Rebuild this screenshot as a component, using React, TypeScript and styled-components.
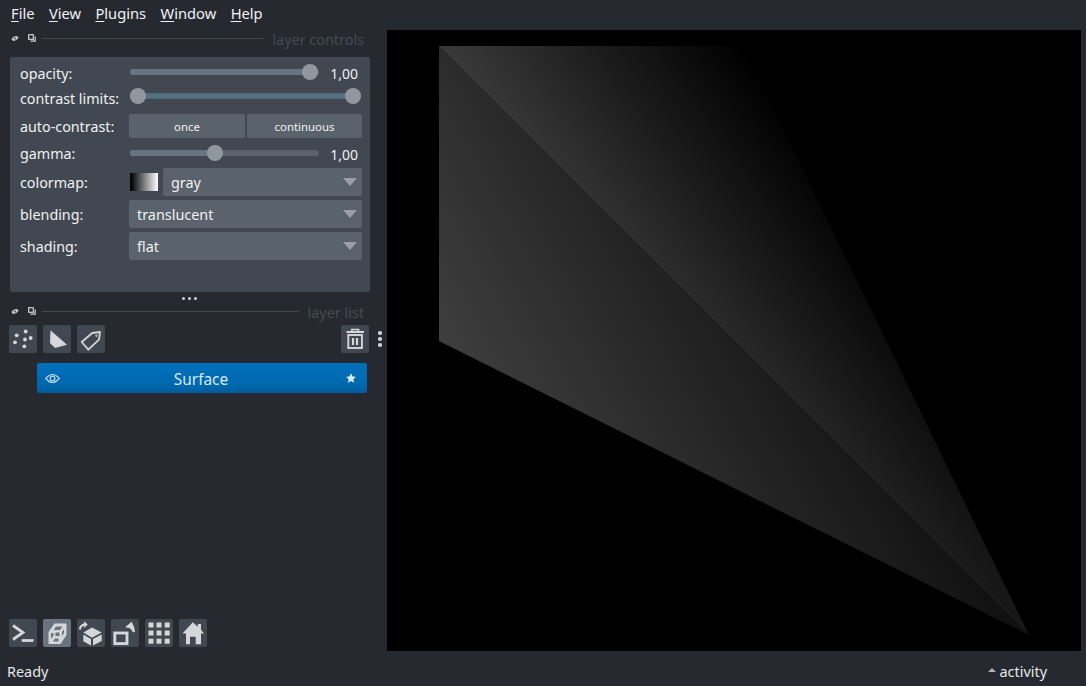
import React from "react";
import styled, { createGlobalStyle } from "styled-components";

const Global = createGlobalStyle`
  html, body { margin: 0; padding: 0; height: 100%; background: #262930; }
  #root { height: 100%; }
  * { box-sizing: border-box; }
`;

const Shell = styled.div`
  width: 1086px; height: 686px; display: flex; flex-direction: column; overflow: hidden;
  background: #262930; color: #f0f1f2; font-family: "Noto Sans", "Open Sans", sans-serif; font-size: 14.4px;
`;
const MenuBar = styled.div`
  height: 26px; display: flex; align-items: center; padding: 0 0 1px 11px; gap: 14.4px; flex: none; color: #f0f1f2; font-size: 14.7px;
`;
const MenuItem = styled.span`
  u { text-underline-offset: 2px; text-decoration-thickness: 1px; }
`;
const Main = styled.div` flex: 1; display: flex; min-height: 0; `;
const Side = styled.div` width: 387px; flex: none; display: flex; flex-direction: column; `;
const DockTitle = styled.div<{ $h: number }>`
  height: ${(p) => p.$h}px; margin-bottom: 7px; flex: none; padding-left: 11px; display: flex; align-items: center;
  color: #454a54; width: 364px;
`;
const TinyIcons = styled.div` display: flex; gap: 9px; align-items: center; margin-right: 6px; svg { display: block; } `;
const Rule = styled.div` flex: 1; height: 1px; background: #414851; margin-right: 9px; `;
const TitleText = styled.span` position: relative; top: 2px; line-height: 1; `;
const ControlsPanel = styled.div`
  margin: 0 17px 0 10px; height: 235px; flex: none; background: #414851; border-radius: 2px;
  padding: 3px 8px 0 10px; display: flex; flex-direction: column;
`;
const Row = styled.div<{ $h: number }>`
  height: ${(p) => p.$h}px; display: grid; grid-template-columns: 109px 1fr; align-items: center; flex: none;
`;
const Label = styled.span` white-space: nowrap; line-height: 1; font-size: 14.3px; margin-top: 2px; `;
const SliderWrap = styled.div<{ $lift: number }>` display: flex; align-items: center; margin-top: ${(p) => -p.$lift}px; `;
const Track = styled.div`
  position: relative; height: 6px; width: 189px; background: #5a626c; border-radius: 3px; margin-left: 1px;
`;
const TrackFill = styled.div<{ $w: number }>`
  height: 6px; background: #6a7480; border-radius: 3px; width: ${(p) => p.$w}px;
`;
const Knob = styled.div<{ $l: number }>`
  position: absolute; top: -5px; left: ${(p) => p.$l}px; width: 16px; height: 16px; border-radius: 50%; background: #8f979f;
`;
const RangeKnob = styled(Knob)` top: -6px; `;
const Value = styled.span` margin: 4px 0 0 11px; width: 28px; text-align: right; line-height: 1; font-size: 14px; `;
const RangeTrack = styled.div`
  position: relative; height: 6px; width: 231px; margin-left: 1px; background: #4f7584;
  border-top: 1px solid #5a626c; border-bottom: 1px solid #5a626c;
`;
const ButtonPair = styled.div` display: grid; grid-template-columns: 116px 115px; gap: 2px; `;
const FlatButton = styled.div`
  height: 24px; background: #5a626c; border-radius: 2px; display: flex; align-items: center; justify-content: center;
  font-size: 11.4px; color: #f0f1f2;
`;
const Combo = styled.div`
  height: 28px; flex: 1; background: #5a626c; border-radius: 2px; display: flex; align-items: center; justify-content: space-between;
  padding: 0 5px 0 8px;
`;
const Arrow = styled.div`
  width: 0; height: 0; border-left: 7.5px solid transparent; border-right: 7.5px solid transparent; border-top: 8px solid #9ba0a7;
`;
const ColorRow = styled.div` display: flex; align-items: center; gap: 5px; padding-left: 1px; `;
const Swatch = styled.div`
  width: 28px; height: 18px; background: linear-gradient(90deg, #000 0%, #111 10%, #fff 100%);
`;
const Splitter = styled.div`
  height: 12px; flex: none; display: flex; justify-content: center; align-items: center; gap: 3px; padding-right: 9px;
  i { width: 3px; height: 3px; border-radius: 50%; background: #d0d2d5; display: block; }
`;
const LayerButtons = styled.div`
  display: flex; padding: 0 2px 0 9px; align-items: center; gap: 6px; height: 28px; flex: none;
`;
const IconBtn = styled.div<{ $active?: boolean }>`
  width: 28px; height: 28px; border-radius: 2px; flex: none; background: ${(p) => (p.$active ? "#6a7480" : "#414851")};
  svg { display: block; }
`;
const Spacer = styled.div` flex: 1; `;
const Kebab = styled.div`
  width: 10px; flex: none; display: flex; flex-direction: column; align-items: center; gap: 2.5px;
  i { width: 3.5px; height: 3.5px; border-radius: 50%; background: #d0d2d5; display: block; }
`;
const LayerItem = styled.div`
  margin: 10px 20px 0 37px; height: 30px; flex: none; border-radius: 2px;
  background: linear-gradient(180deg, #0070bb 0%, #0069b0 70%, #005d9e 100%);
  display: flex; align-items: center; padding: 0 11px 0 8px; color: #dbe9f4; font-size: 15.4px;
`;
const LayerName = styled.span` flex: 1; text-align: center; padding: 2px 4px 0 0; `;
const Grow = styled.div` flex: 1; `;
const ViewerButtons = styled.div` display: flex; padding: 0 0 4px 9px; gap: 6px; flex: none; `;
const CanvasArea = styled.div` flex: 1; padding: 4px 5px 0 0; display: flex; `;
const Canvas = styled.div` flex: 1; background: #000; `;
const CanvasSvg = styled.svg` display: block; width: 100%; height: 100%; `;
const StatusBar = styled.div`
  height: 35px; flex: none; display: flex; align-items: center; justify-content: space-between; padding: 6px 39px 0 7px; color: #e6e8ea;
`;
const Activity = styled.span` display: flex; align-items: center; gap: 4px; `;
const Caret = styled.span`
  width: 0; height: 0; border-left: 4px solid transparent; border-right: 4px solid transparent; border-bottom: 4px solid #b0b3b8; margin-top: -3px;
`;

const INK = "#d4d6d9";

const EyeTiny = () => (
  <svg width="8" height="7" viewBox="0 0 8 7">
    <path d="M0.3 4 Q3 0.5 6 1 L7.7 2.8 Q5 6.5 2 6Z" fill="#c4c6ca" />
    <circle cx="4" cy="3.5" r="1" fill="#55585f" />
  </svg>
);
const FloatTiny = () => (
  <svg width="8" height="8" viewBox="0 0 8 8" fill="none" stroke="#d0d2d5" strokeWidth="1.2">
    <rect x="0.7" y="0.7" width="4.6" height="4.6" />
    <path d="M2.5 7.2H7.2V2.6" />
  </svg>
);

const Slider = ({ fill, knob }: { fill: number; knob: number }) => (
  <SliderWrap $lift={2}>
    <Track>
      <TrackFill $w={fill} />
      <Knob $l={knob} />
    </Track>
    <Value>1,00</Value>
  </SliderWrap>
);

const Icon = ({ children, ...rest }: React.SVGProps<SVGSVGElement>) => (
  <svg width="28" height="28" viewBox="0 0 28 28" {...rest}>{children}</svg>
);

export default function App() {
  return (
    <Shell>
      <Global />
      <MenuBar>
        <MenuItem><u>F</u>ile</MenuItem>
        <MenuItem><u>V</u>iew</MenuItem>
        <MenuItem><u>P</u>lugins</MenuItem>
        <MenuItem><u>W</u>indow</MenuItem>
        <MenuItem><u>H</u>elp</MenuItem>
      </MenuBar>
      <Main>
        <Side>
          <DockTitle $h={24}>
            <TinyIcons><EyeTiny /><FloatTiny /></TinyIcons>
            <Rule />
            <TitleText>layer controls</TitleText>
          </DockTitle>
          <ControlsPanel>
            <Row $h={26}><Label>opacity:</Label><Slider fill={180} knob={172} /></Row>
            <Row $h={25}>
              <Label>contrast limits:</Label>
              <SliderWrap $lift={5}>
                <RangeTrack><RangeKnob $l={0} /><RangeKnob $l={215} /></RangeTrack>
              </SliderWrap>
            </Row>
            <Row $h={30}>
              <Label>auto-contrast:</Label>
              <ButtonPair><FlatButton>once</FlatButton><FlatButton>continuous</FlatButton></ButtonPair>
            </Row>
            <Row $h={25}><Label>gamma:</Label><Slider fill={85} knob={77} /></Row>
            <Row $h={32}>
              <Label>colormap:</Label>
              <ColorRow><Swatch /><Combo>gray<Arrow /></Combo></ColorRow>
            </Row>
            <Row $h={32}><Label>blending:</Label><Combo>translucent<Arrow /></Combo></Row>
            <Row $h={32}><Label>shading:</Label><Combo>flat<Arrow /></Combo></Row>
          </ControlsPanel>
          <Splitter><i /><i /><i /></Splitter>
          <DockTitle $h={14}>
            <TinyIcons><EyeTiny /><FloatTiny /></TinyIcons>
            <Rule />
            <TitleText>layer list</TitleText>
          </DockTitle>
          <LayerButtons>
            <IconBtn>
              <Icon fill={INK}>
                <circle cx="16.7" cy="6.5" r="1.9" /><circle cx="7.7" cy="10.3" r="1.9" /><circle cx="16" cy="14.5" r="1.9" />
                <circle cx="21.7" cy="13" r="1.9" /><circle cx="6" cy="17.3" r="1.9" /><circle cx="15.3" cy="21.3" r="1.9" />
              </Icon>
            </IconBtn>
            <IconBtn>
              <Icon fill={INK}><path d="M7.5 5.3 L24 19.7 L12 23 L7 18Z" /></Icon>
            </IconBtn>
            <IconBtn>
              <Icon fill="none" stroke={INK} strokeWidth="1.8" strokeLinejoin="round">
                <path d="M4.7 17 L15.3 8 L23 7 L22 14.7 L11.3 24.7Z" /><circle cx="19.5" cy="10.7" r="0.8" strokeWidth="1" />
              </Icon>
            </IconBtn>
            <Spacer />
            <IconBtn>
              <Icon fill="none" stroke={INK}>
                <path d="M5.5 7H23" strokeWidth="2" /><path d="M10.8 6.5V4.5H17.5V6.5" strokeWidth="1.6" />
                <rect x="7.3" y="10" width="13.6" height="13" strokeWidth="1.9" />
                <path d="M12 13V20M16 13V20" strokeWidth="2.2" />
              </Icon>
            </IconBtn>
            <Kebab><i /><i /><i /></Kebab>
          </LayerButtons>
          <LayerItem>
            <svg width="15" height="11" viewBox="0 0 15 11" fill="none" stroke="#bcd6ea" strokeWidth="1.2">
              <path d="M0.8 5.5 Q7.5 -2.5 14.2 5.5 Q7.5 13.5 0.8 5.5Z" /><circle cx="7.5" cy="5.5" r="2.4" />
            </svg>
            <LayerName>Surface</LayerName>
            <svg width="10" height="10" viewBox="0 0 24 24" fill="#dbe9f4"><path d="M12 0.5 L15.6 8.2 L23.8 9.2 L17.8 15 L19.4 23.4 L12 19.2 L4.6 23.4 L6.2 15 L0.2 9.2 L8.4 8.2Z" /></svg>
          </LayerItem>
          <Grow />
          <ViewerButtons>
            <IconBtn>
              <Icon fill="none" stroke={INK} strokeWidth="2.8">
                <path d="M4 6.5 L14 13.5 L4 20.5" /><path d="M12.7 21.5H24.5" />
              </Icon>
            </IconBtn>
            <IconBtn $active>
              <Icon fill={INK} fillRule="evenodd">
                <path d="M5.5 13 L11.5 4.5 H23.5 V16 L17.5 25 H5.5Z M10.5 11 H17 L19.5 7.5 H13Z M8 14 V20 L10.5 16.5 V14Z M12.5 13.5 V17 H16.5 V13.5Z M21 10 L19 13 V17 L21 14Z M10 22.5 H15.5 V19.5 H12Z" />
              </Icon>
            </IconBtn>
            <IconBtn>
              <Icon fill={INK}>
                <path d="M15 8.5 L24.7 13.6 L15 18.7 L6.3 13.6Z" /><path d="M6.3 15.6 L14 20 V26.5 L6.3 22.2Z" /><path d="M16 20 L24.7 15.6 V22 L16 26.5Z" />
                <path d="M1.8 10.5 Q2.2 5.5 7 4.5 V2.2 L10.8 5.6 L7 9 V6.8 Q4.5 7.2 4 10.5Z" />
              </Icon>
            </IconBtn>
            <IconBtn>
              <Icon fill="none" stroke={INK}>
                <rect x="3.8" y="14" width="12.2" height="10.6" strokeWidth="2.9" />
                <path d="M20.7 2.7 L14 8.3 L18.2 8.9 Q21 10.5 22 13.5 L24 12.7 Q23.5 7.5 20.7 2.7Z" fill={INK} stroke="none" />
              </Icon>
            </IconBtn>
            <IconBtn>
              <Icon fill={INK}>
                {[3.5, 11.5, 19.7].flatMap((y) => [3.5, 11.5, 19.7].map((x) => <rect key={`${x}-${y}`} x={x} y={y} width="5" height="5" />))}
              </Icon>
            </IconBtn>
            <IconBtn>
              <Icon fill={INK}>
                <path d="M13.8 3.3 L18.8 7.8 V5 H22 V10.8 L25 14.5 H22 V25.3 H16.7 V17.7 H11 V25.3 H7 V14.5 H3.5Z" />
              </Icon>
            </IconBtn>
          </ViewerButtons>
        </Side>
        <CanvasArea>
          <Canvas>
            <CanvasSvg viewBox="0 0 694 621">
              <defs>
                <linearGradient id="g1" gradientUnits="userSpaceOnUse" x1="-74" y1="87" x2="248" y2="-94">
                  <stop offset="0" stopColor="#3e3e3e" /><stop offset="1" stopColor="#101010" />
                </linearGradient>
                <linearGradient id="g2" gradientUnits="userSpaceOnUse" x1="52" y1="16" x2="256" y2="-126.5">
                  <stop offset="0" stopColor="#3a3a3a" /><stop offset="1" stopColor="#000" />
                </linearGradient>
              </defs>
              <polygon points="52,16 52,311 642,605" fill="url(#g1)" />
              <polygon points="52,16 356,16 642,605" fill="url(#g2)" />
            </CanvasSvg>
          </Canvas>
        </CanvasArea>
      </Main>
      <StatusBar>
        <span>Ready</span>
        <Activity><Caret />activity</Activity>
      </StatusBar>
    </Shell>
  );
}
